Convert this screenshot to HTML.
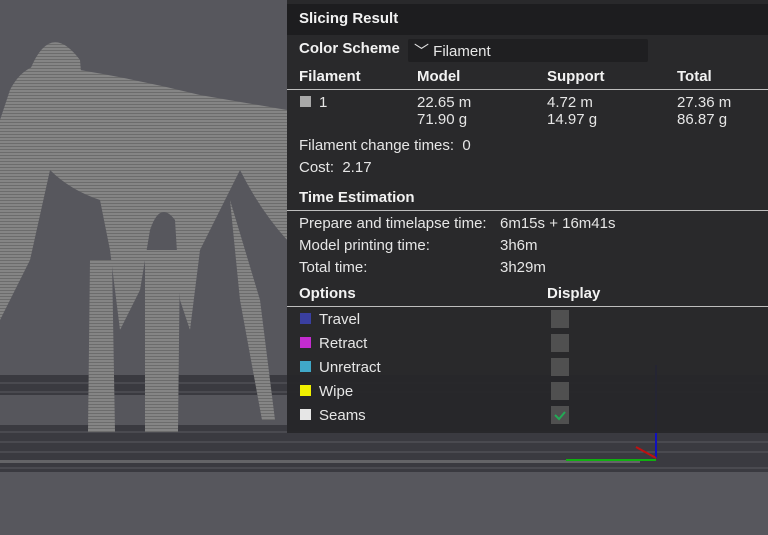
<!DOCTYPE html><html><head><style>
*{margin:0;padding:0}
body{width:768px;height:535px;overflow:hidden;background:#57575d;font-family:"Liberation Sans",sans-serif;position:relative}
.t{position:absolute;color:#e6e6e6;font-size:15px;white-space:nowrap;line-height:17px}
.b{font-weight:bold;color:#f2f2f2}
#panel{position:absolute;left:287px;top:0;width:481px;height:433px;background:rgba(38,38,40,0.94)}
.hl{position:absolute;left:287px;width:481px;height:1px;background:#bdbdbd}
.sq{position:absolute;width:11px;height:11px}
.cb{position:absolute;left:551px;width:18px;height:18px;background:#505050}
</style></head><body>
<svg style="position:absolute;left:0;top:0" width="768" height="535">
<defs><pattern id="s" width="3" height="3" patternUnits="userSpaceOnUse"><rect width="3" height="2" fill="#858585"/><rect y="2" width="3" height="1" fill="#6c6c6c"/></pattern></defs>
<rect x="0" y="375" width="768" height="97" fill="#3a3a40"/>
<g stroke="#5a5a60" stroke-width="1">
<line x1="0" y1="383" x2="768" y2="383"/><line x1="0" y1="392" x2="768" y2="392"/><line x1="0" y1="432" x2="768" y2="432"/><line x1="0" y1="442" x2="768" y2="442"/><line x1="0" y1="452" x2="768" y2="452"/><line x1="0" y1="468" x2="768" y2="468"/>
</g>
<rect x="0" y="460" width="640" height="3" fill="#8d8d8d" opacity=".5"/>
<rect x="0" y="395" width="287" height="30" fill="#56565c"/>
<path d="M10 90 Q30 50 80 70 Q140 80 200 95 L287 110 L287 240 Q260 210 240 170 Q215 220 200 250 L190 330 L180 300 L175 220 Q160 200 150 230 L140 290 L120 330 L110 250 L100 200 Q70 190 50 170 L30 260 L0 320 L0 120 Z" fill="url(#s)"/>
<path d="M30 70 Q50 20 80 60 L85 120 L40 130 Z" fill="url(#s)"/>
<path d="M145 250 L180 250 L178 432 L145 432 Z" fill="url(#s)"/>
<path d="M90 260 L112 260 L115 432 L88 432 Z" fill="url(#s)"/>
<path d="M230 200 L260 300 L275 420 L262 420 L240 300 Z" fill="url(#s)"/>
<line x1="656" y1="365" x2="656" y2="458" stroke="#1010c0" stroke-width="2"/>
<line x1="566" y1="460" x2="656" y2="460" stroke="#10b010" stroke-width="2"/>
<line x1="636" y1="447" x2="656" y2="458" stroke="#c01010" stroke-width="2"/>
</svg>
<div id="panel"></div>
<div style="position:absolute;left:287px;top:4px;width:481px;height:31px;background:#1d1d1f"></div>
<div class="t b" style="left:299px;top:10px">Slicing Result</div>
<div class="t b" style="left:299px;top:40px">Color Scheme</div>
<div style="position:absolute;left:408px;top:39px;width:240px;height:23px;background:#1f1f21;border-radius:2px"></div>
<div class="t" style="left:414px;top:43px">﹀ Filament</div>
<div class="t b" style="left:299px;top:68px">Filament</div>
<div class="t b" style="left:417px;top:68px">Model</div>
<div class="t b" style="left:547px;top:68px">Support</div>
<div class="t b" style="left:677px;top:68px">Total</div>
<div class="hl" style="top:89px"></div>
<div class="sq" style="left:300px;top:96px;background:#a8a8a8"></div>
<div class="t" style="left:319px;top:94px">1</div>
<div class="t" style="left:417px;top:94px">22.65 m<br>71.90 g</div>
<div class="t" style="left:547px;top:94px">4.72 m<br>14.97 g</div>
<div class="t" style="left:677px;top:94px">27.36 m<br>86.87 g</div>
<div class="t" style="left:299px;top:137px">Filament change times:&nbsp; 0</div>
<div class="t" style="left:299px;top:159px">Cost:&nbsp; 2.17</div>
<div class="t b" style="left:299px;top:189px">Time Estimation</div>
<div class="hl" style="top:210px"></div>
<div class="t" style="left:299px;top:215px">Prepare and timelapse time:</div><div class="t" style="left:500px;top:215px">6m15s + 16m41s</div>
<div class="t" style="left:299px;top:237px">Model printing time:</div><div class="t" style="left:500px;top:237px">3h6m</div>
<div class="t" style="left:299px;top:259px">Total time:</div><div class="t" style="left:500px;top:259px">3h29m</div>
<div class="t b" style="left:299px;top:285px">Options</div>
<div class="t b" style="left:547px;top:285px">Display</div>
<div class="hl" style="top:306px"></div>
<div class="sq" style="left:300px;top:313px;background:#3a3fa0"></div><div class="t" style="left:319px;top:311px">Travel</div><div class="cb" style="top:310px"></div>
<div class="sq" style="left:300px;top:337px;background:#c42cd0"></div><div class="t" style="left:319px;top:335px">Retract</div><div class="cb" style="top:334px"></div>
<div class="sq" style="left:300px;top:361px;background:#40a8c8"></div><div class="t" style="left:319px;top:359px">Unretract</div><div class="cb" style="top:358px"></div>
<div class="sq" style="left:300px;top:385px;background:#f0f000"></div><div class="t" style="left:319px;top:383px">Wipe</div><div class="cb" style="top:382px"></div>
<div class="sq" style="left:300px;top:409px;background:#e6e6e6"></div><div class="t" style="left:319px;top:407px">Seams</div><div class="cb" style="top:406px"><svg width="18" height="18"><path d="M4 9 L8 13 L14 6" stroke="#22aa55" stroke-width="2" fill="none"/></svg></div>
</body></html>
